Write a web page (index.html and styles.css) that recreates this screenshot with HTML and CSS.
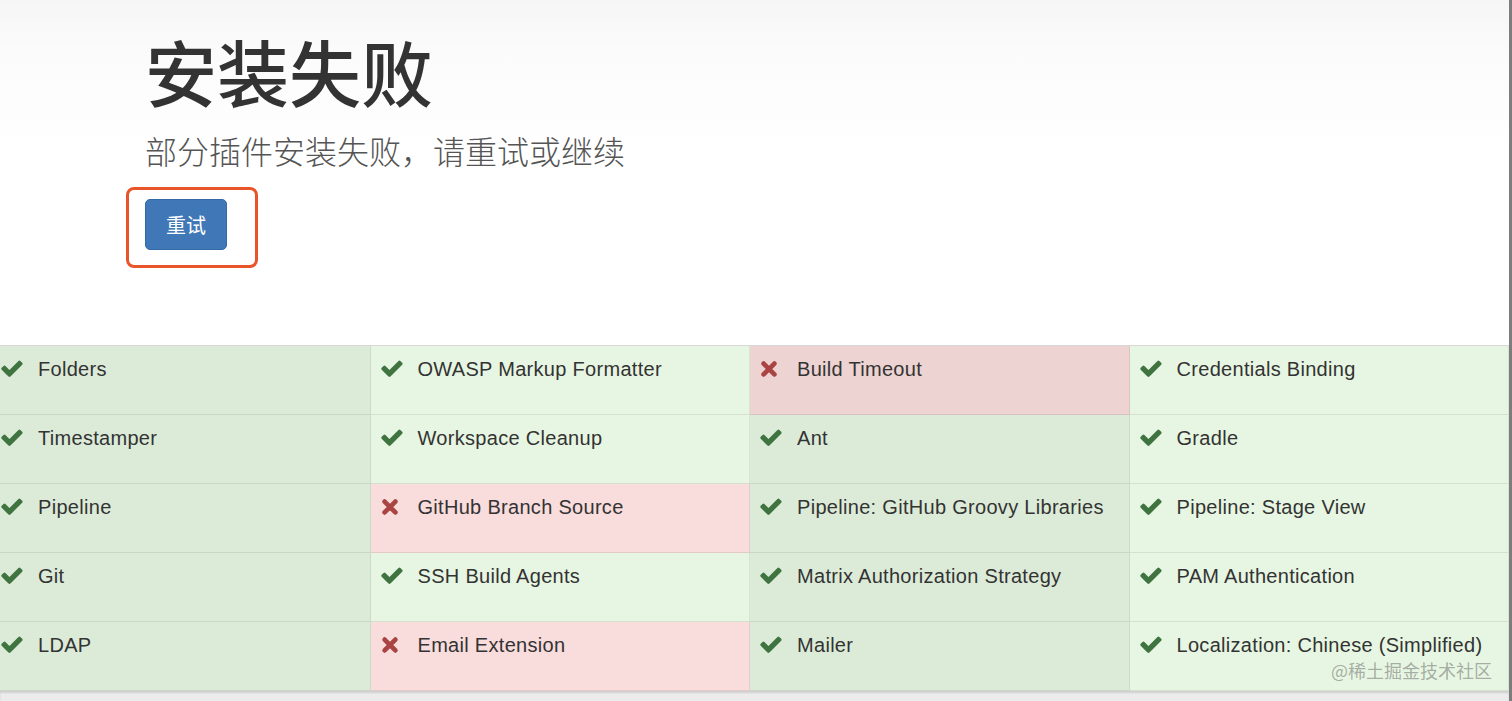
FILE: index.html
```html
<!DOCTYPE html>
<html lang="zh-CN">
<head>
  <meta charset="UTF-8" />
  <title>安装失败</title>
  <link rel="stylesheet" href="styles.css">
</head>
<body>
  <div class="frame">
    <div class="header">
      <h1 class="title">安装失败</h1>
      <p class="subtitle">部分插件安装失败，请重试或继续</p>
      <div class="mark">
        <button class="retry">重试</button>
      </div>
    </div>

    <div class="plugins">
      <div class="cell ok"><svg class="ic"><use href="#check"/></svg><span>Folders</span></div>
      <div class="cell ok"><svg class="ic"><use href="#check"/></svg><span>OWASP Markup Formatter</span></div>
      <div class="cell fail"><svg class="ic"><use href="#cross"/></svg><span>Build Timeout</span></div>
      <div class="cell ok"><svg class="ic"><use href="#check"/></svg><span>Credentials Binding</span></div>

      <div class="cell ok"><svg class="ic"><use href="#check"/></svg><span>Timestamper</span></div>
      <div class="cell ok"><svg class="ic"><use href="#check"/></svg><span>Workspace Cleanup</span></div>
      <div class="cell ok"><svg class="ic"><use href="#check"/></svg><span>Ant</span></div>
      <div class="cell ok"><svg class="ic"><use href="#check"/></svg><span>Gradle</span></div>

      <div class="cell ok"><svg class="ic"><use href="#check"/></svg><span>Pipeline</span></div>
      <div class="cell fail"><svg class="ic"><use href="#cross"/></svg><span>GitHub Branch Source</span></div>
      <div class="cell ok"><svg class="ic"><use href="#check"/></svg><span>Pipeline: GitHub Groovy Libraries</span></div>
      <div class="cell ok"><svg class="ic"><use href="#check"/></svg><span>Pipeline: Stage View</span></div>

      <div class="cell ok"><svg class="ic"><use href="#check"/></svg><span>Git</span></div>
      <div class="cell ok"><svg class="ic"><use href="#check"/></svg><span>SSH Build Agents</span></div>
      <div class="cell ok"><svg class="ic"><use href="#check"/></svg><span>Matrix Authorization Strategy</span></div>
      <div class="cell ok"><svg class="ic"><use href="#check"/></svg><span>PAM Authentication</span></div>

      <div class="cell ok"><svg class="ic"><use href="#check"/></svg><span>LDAP</span></div>
      <div class="cell fail"><svg class="ic"><use href="#cross"/></svg><span>Email Extension</span></div>
      <div class="cell ok"><svg class="ic"><use href="#check"/></svg><span>Mailer</span></div>
      <div class="cell ok"><svg class="ic"><use href="#check"/></svg><span>Localization: Chinese (Simplified)</span></div>
    </div>

    <div class="footer"></div>

    <div class="watermark">@稀土掘金技术社区</div>
  </div>

  <!-- icons -->
  <svg width="0" height="0" class="defs">
    <symbol id="check" viewBox="100 340 1600 1140">
      <path d="M1671 566q0 40-28 68l-724 724-136 136q-28 28-68 28t-68-28l-136-136-362-362q-28-28-28-68t28-68l136-136q28-28 68-28t68 28l294 295 656-657q28-28 68-28t68 28l136 136q28 28 28 68z"/>
    </symbol>
    <symbol id="cross" viewBox="0 0 20 20">
      <path d="M4 4L16 16M16 4L4 16" stroke-width="5.2" stroke-linecap="round"/>
    </symbol>
  </svg>
</body>
</html>
```

FILE: styles.css
```css
body {
  margin: 0;
  padding: 0;
  background: #fff;
  font-family: "Liberation Sans", Arial, "Noto Sans CJK SC", sans-serif;
  color: #333;
}

.frame {
  position: relative;
  width: 1509px;
  height: 701px;
  overflow: hidden;
  border-right: 3px solid #7d7d7d;
  background: #ececec;
}

.header {
  height: 346px;
  padding-left: 145px;
  box-sizing: border-box;
  background: linear-gradient(#f6f6f6, #fbfbfb 15%, #fff 45%);
  border-bottom: 1px solid #d8d8d8;
}

.title {
  margin: 0;
  padding-top: 24px;
  font-family: "Noto Sans CJK SC", sans-serif;
  font-size: 72px;
  font-weight: 500;
  line-height: 92px;
  color: #333;
}

.subtitle {
  margin: 12px 0 0;
  font-family: "Noto Sans CJK SC", sans-serif;
  font-size: 32px;
  font-weight: 300;
  line-height: 44px;
  color: #555;
}

.mark {
  display: inline-block;
  margin: 15px 0 0 -19px;
  padding: 9px 28px 15px 16px;
  border: 3px solid #e8552b;
  border-radius: 8px;
}

.retry {
  display: block;
  width: 82px;
  height: 51px;
  padding: 0;
  background: #3f77b7;
  border: 1px solid #336aa6;
  border-radius: 5px;
  color: #fff;
  font-family: "Noto Sans CJK SC", sans-serif;
  font-size: 20px;
  font-weight: 400;
}

/* plugin list */
.plugins {
  display: grid;
  grid-template-columns: repeat(4, 379.5px);
  grid-auto-rows: 69px;
  margin-left: -9px;
}

.cell {
  display: flex;
  align-items: flex-start;
  padding: 10px 10px 0;
  box-sizing: border-box;
  border-right: 1px solid rgba(0, 0, 0, 0.07);
  border-bottom: 1px solid rgba(0, 0, 0, 0.08);
  font-size: 20px;
  line-height: 26px;
  letter-spacing: 0.3px;
  color: #333;
}

.cell span {
  margin-left: 15px;
}

.ok {
  background: #e7f6e2;
}

.fail {
  background: #f9dcdc;
}

.cell:nth-child(odd).ok {
  background: #dcebd8;
}

.cell:nth-child(odd).fail {
  background: #edd3d2;
}

.ic {
  flex: none;
  width: 22px;
  height: 17px;
  margin-top: 4px;
}

.ok .ic {
  fill: #3f7441;
}

.fail .ic {
  width: 18px;
  height: 18px;
  margin-right: 4px;
  stroke: #a94442;
}

.footer {
  height: 11px;
  box-shadow: inset 0 2px 2px rgba(0, 0, 0, 0.12);
}

.watermark {
  position: absolute;
  right: 17px;
  bottom: 20px;
  font-family: "Noto Sans CJK SC", sans-serif;
  font-size: 18px;
  line-height: 22px;
  color: rgba(110, 110, 110, 0.55);
}

.defs {
  position: absolute;
}
```
